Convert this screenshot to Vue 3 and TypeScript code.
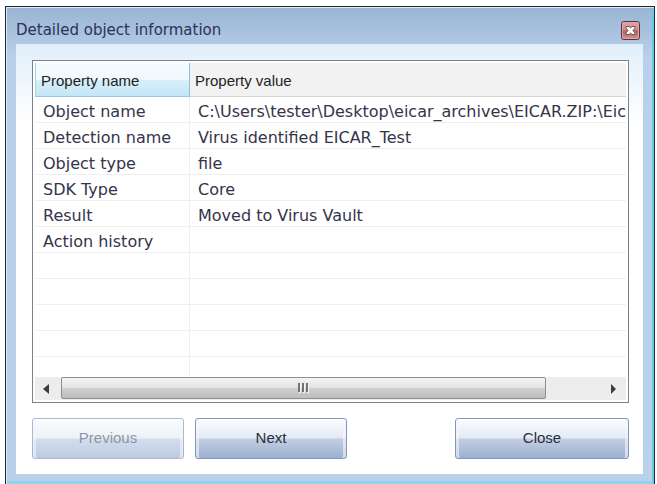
<script setup lang="ts">
import { ref } from 'vue'

interface Property {
  name: string
  value: string
}

const properties = ref<Property[]>([
  { name: 'Object name', value: 'C:\\Users\\tester\\Desktop\\eicar_archives\\EICAR.ZIP:\\Eic' },
  { name: 'Detection name', value: 'Virus identified EICAR_Test' },
  { name: 'Object type', value: 'file' },
  { name: 'SDK Type', value: 'Core' },
  { name: 'Result', value: 'Moved to Virus Vault' },
  { name: 'Action history', value: '' },
])
const emptyRows = 5
</script>

<template>
  <main class="dialog" role="dialog" aria-labelledby="dialog-title">
    <header class="titlebar">
      <h1 id="dialog-title">Detailed object information</h1>
      <button class="dismiss" type="button" aria-label="Close window">
        <svg viewBox="0 0 19 19" width="19" height="19" aria-hidden="true">
          <defs>
            <linearGradient id="red" x1="0" y1="0" x2="0" y2="1">
              <stop offset="0" stop-color="#e3a9a8" />
              <stop offset="0.48" stop-color="#d08583" />
              <stop offset="0.52" stop-color="#b95c5a" />
              <stop offset="1" stop-color="#dc9492" />
            </linearGradient>
          </defs>
          <rect x="0.5" y="0.5" width="18" height="18" rx="2" fill="url(#red)" stroke="#54353f" />
          <rect x="1.5" y="1.5" width="16" height="16" rx="1" fill="none" stroke="#e0a3a2" />
          <path d="M5 5.5h3.2l1.3 1.6 1.3-1.6H14v1.6L11.9 9.5l2.1 2.4v1.6h-3.2l-1.3-1.6-1.3 1.6H5v-1.6l2.1-2.4L5 7.1z" fill="#fff" stroke="#66525a" stroke-width="1" />
        </svg>
      </button>
    </header>

    <section class="client">
      <div class="list">
        <div class="viewport">
          <table>
            <colgroup>
              <col class="name-col" />
              <col />
            </colgroup>
            <thead>
              <tr>
                <th class="sorted" scope="col">Property name</th>
                <th scope="col">Property value</th>
              </tr>
            </thead>
            <tbody>
              <tr v-for="property in properties" :key="property.name">
                <td>{{ property.name }}</td>
                <td>{{ property.value }}</td>
              </tr>
              <tr v-for="row in emptyRows" :key="row">
                <td></td>
                <td></td>
              </tr>
            </tbody>
          </table>
        </div>
        <div class="scrollbar">
          <button class="arrow back" type="button" aria-label="Scroll left">
            <svg viewBox="0 0 7 10" width="7" height="10" aria-hidden="true"><path d="M6 0v10L0 5z" fill="#3c3c3c" /></svg>
          </button>
          <div class="track">
            <div class="thumb">
              <svg viewBox="0 0 13 10" width="13" height="10" aria-hidden="true">
                <path d="M1 0h2v9H1zM5 0h2v9H5zM9 0h2v9H9z" fill="#747474" />
                <path d="M3 1h1v9H2V9h1zM7 1h1v9H6V9h1zM11 1h1v9h-2V9h1z" fill="#f5f5f5" />
              </svg>
            </div>
          </div>
          <button class="arrow" type="button" aria-label="Scroll right">
            <svg viewBox="0 0 7 10" width="7" height="10" aria-hidden="true"><path d="M1 0v10l5-5z" fill="#3c3c3c" /></svg>
          </button>
        </div>
      </div>

      <footer class="actions">
        <button class="action" type="button" disabled>Previous</button>
        <button class="action" type="button">Next</button>
        <button class="action close" type="button">Close</button>
      </footer>
    </section>
  </main>
</template>

<style>
body {
  background: #fff;
}

#app {
  overflow: hidden;
}
</style>

<style scoped>
* {
  box-sizing: border-box;
}

.dialog {
  margin: 6px 2px 0 5px;
  padding: 0 11px 10px 10px;
  border: 1px solid #22272e;
  border-width: 1px 1px 0 1px;
  background: linear-gradient(#98b4d2, #b9d0ea 50px, #bad1ea);
  box-shadow: inset 1px 1px 0 #d9ecf8, inset -2px 0 0 #62cdea, inset 0 -3px 0 #8fd3ee;
  font-family: "DejaVu Sans", Verdana, sans-serif;
  font-size: 16px;
  color: #34344a;
}

.titlebar {
  display: flex;
  align-items: center;
  justify-content: space-between;
  height: 37px;
  padding: 9px 3px 0 0;
}

h1 {
  margin: 0;
  font-size: 15px;
  font-weight: 400;
  line-height: 20px;
  color: #2f3156;
}

.dismiss {
  display: flex;
  padding: 0;
  border: 0;
  background: none;
}

.client {
  padding: 16px 14px 15px 16px;
  background: linear-gradient(#e0effb, #fff 80px);
}

.list {
  padding: 2px;
  border: 1px solid #7c828b;
  background: #fff;
}

.viewport {
  overflow: hidden;
}

table {
  width: 100%;
  table-layout: fixed;
  border-collapse: separate;
  border-spacing: 0;
}

.name-col {
  width: 155px;
}

th {
  height: 34px;
  padding: 2px 5px 0;
  border-bottom: 1px solid #d5d5d5;
  background: #f2f2f2;
  text-align: left;
  font-family: "Liberation Sans", Arial, sans-serif;
  font-size: 15px;
  font-weight: 400;
  line-height: 18px;
  color: #222;
}

th.sorted {
  border-left: 1px solid #a5d4ea;
  border-right: 1px solid #85c1e0;
  border-bottom-color: #96c9e4;
  background: linear-gradient(#f5fbfe, #eef8fd 50%, #d8effa 51%, #c3e6f6);
}

td {
  height: 26px;
  padding: 4px 8px 0;
  border-bottom: 1px solid #efefef;
  line-height: 20px;
  white-space: nowrap;
  overflow: hidden;
}

td:first-child {
  border-right: 1px solid #efefef;
}

tbody tr:last-child td {
  height: 20px;
  border-bottom: 0;
}

.scrollbar {
  display: flex;
  height: 23px;
  background: #ededed;
}

.arrow {
  display: flex;
  align-items: center;
  justify-content: center;
  width: 26px;
  padding: 0;
  border: 0;
  background: none;
}

.back {
  padding-right: 4px;
}

.track {
  flex: 1;
}

.thumb {
  display: flex;
  align-items: center;
  justify-content: center;
  width: 90%;
  height: 22px;
  border: 1px solid #8f8f8f;
  border-radius: 2px;
  background: linear-gradient(#f4f4f4, #e3e3e3 48%, #cfcfcf 52%, #bdbdbd);
}

.actions {
  display: flex;
  gap: 11px;
  padding-top: 15px;
}

.action {
  width: 152px;
  height: 41px;
  padding: 0 0 2px;
  border: 1px solid #8298b8;
  border-radius: 3px;
  background: linear-gradient(#fbfcfe, #e4eaf3 48%, #c3cee2 52%, #9bafd0);
  box-shadow: inset 3px 0 0 #f3f6fb99, inset -3px 0 0 #f3f6fb99, inset 0 1px 0 #fff;
  font-family: "Liberation Sans", Arial, sans-serif;
  font-size: 15px;
  color: #2a2e40;
}

.action:disabled {
  border-color: #a9b9d1;
  background: linear-gradient(#fcfdfe, #edf2f8 48%, #d4dded 52%, #bccbe1);
  color: #8d95a3;
}

.close {
  width: 174px;
  margin-left: auto;
}
</style>
